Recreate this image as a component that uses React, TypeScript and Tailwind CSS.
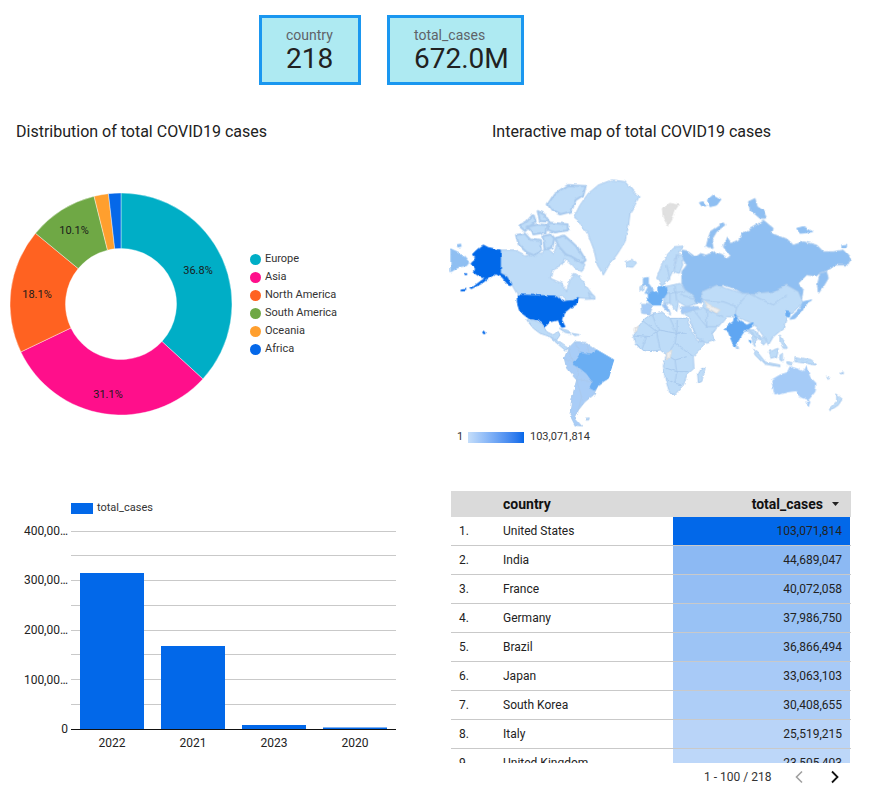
import React from "react";

const font = "font-['Roboto',_'Liberation_Sans',_sans-serif]";

const pieData = [
  { name: "Europe", value: 36.8, color: "#00aec6", label: "36.8%", lx: 198, ly: 270 },
  { name: "Asia", value: 31.1, color: "#ff0f8b", label: "31.1%", lx: 108, ly: 394 },
  { name: "North America", value: 18.1, color: "#ff6221", label: "18.1%", lx: 37, ly: 294 },
  { name: "South America", value: 10.1, color: "#6fa845", label: "10.1%", lx: 74, ly: 230 },
  { name: "Oceania", value: 2.1, color: "#ff9f2e", label: "", lx: 0, ly: 0 },
  { name: "Africa", value: 1.8, color: "#0568e9", label: "", lx: 0, ly: 0 },
];

const rows = [
  { country: "United States", cases: "103,071,814", bg: "bg-[#0268e9]" },
  { country: "India", cases: "44,689,047", bg: "bg-[#8cb9f3]" },
  { country: "France", cases: "40,072,058", bg: "bg-[#94bef4]" },
  { country: "Germany", cases: "37,986,750", bg: "bg-[#99c2f5]" },
  { country: "Brazil", cases: "36,866,494", bg: "bg-[#9dc4f5]" },
  { country: "Japan", cases: "33,063,103", bg: "bg-[#a8caf7]" },
  { country: "South Korea", cases: "30,408,655", bg: "bg-[#aecef7]" },
  { country: "Italy", cases: "25,519,215", bg: "bg-[#b9d4f8]" },
  { country: "United Kingdom", cases: "23,505,403", bg: "bg-[#bdd7f9]" },
];

const bars = [
  { year: "2022", x: 80, top: 573 },
  { year: "2021", x: 161, top: 646 },
  { year: "2023", x: 242, top: 725 },
  { year: "2020", x: 323, top: 727 },
];

function arc(start: number, end: number) {
  const cx = 121;
  const cy = 304;
  const R = 111;
  const r = 55.5;
  const p = (pct: number, rad: number) => {
    const a = (pct / 100) * Math.PI * 2 - Math.PI / 2;
    return `${cx + rad * Math.cos(a)},${cy + rad * Math.sin(a)}`;
  };
  const large = end - start > 50 ? 1 : 0;
  return `M${p(start, R)} A${R},${R} 0 ${large} 1 ${p(end, R)} L${p(end, r)} A${r},${r} 0 ${large} 0 ${p(start, r)} Z`;
}

const Donut = () => {
  let acc = 0;
  return (
    <svg width="223" height="223" viewBox="10 193 223 223" className="block">
      {pieData.map((d) => {
        const path = arc(acc, acc + d.value);
        acc += d.value;
        return <path key={d.name} d={path} fill={d.color} stroke="#ffffff" strokeWidth="0.4" />;
      })}
      {pieData
        .filter((d) => d.label)
        .map((d) => (
          <text key={d.name} x={d.lx} y={d.ly + 4} textAnchor="middle" fontSize="11" fill="#1a1a1a">
            {d.label}
          </text>
        ))}
    </svg>
  );
};

const WorldMap = () => (
  <svg width="420" height="257" viewBox="0 0 1260 771" className="block" stroke="#a9caee" strokeWidth="3" strokeLinejoin="round" fill="#bedcf8">
    <defs>
      {/* roughens the hand-traced coasts */}
      <filter id="coast" x="0" y="0" width="1260" height="771" filterUnits="userSpaceOnUse">
        <feTurbulence type="fractalNoise" baseFrequency="0.045" numOctaves="3" seed="4" result="n" />
        <feDisplacementMap in="SourceGraphic" in2="n" scale="10" xChannelSelector="R" yChannelSelector="G" />
        <feGaussianBlur stdDeviation="0.8" />
      </filter>
    </defs>
    <g filter="url(#coast)">
      {/* north america, coords from the 3x crop */}
      <g transform="translate(15,15)">
        <path fill="#8fbff2" stroke="#8fbff2" d="M18,222 L40,232 L58,245 L72,262 L65,272 L45,275 L35,280 L18,290 Z" />
        <path fill="#8fbff2" stroke="none" d="M34,208 L48,206 L50,215 L38,218 Z" />
        <path d="M166,225 L210,225 L240,240 L255,240 L270,225 L290,240 L300,215 L325,235 L335,208 L355,212 L372,232 L392,245 L420,268 L410,290 L392,280 L374,262 L358,250 L352,268 L322,285 L316,310 L350,325 L365,350 L375,312 L385,295 L405,305 L425,335 L450,368 L425,370 L400,368 L380,385 L350,365 L218,360 L202,332 L185,300 L166,295 Z" />
        <g strokeWidth="6">
          <path d="M308,88 L330,55 L370,30 L422,33 L415,60 L392,75 L378,110 L345,118 L320,105 Z" />
          <path d="M222,152 L245,140 L265,118 L272,140 L258,152 L240,168 Z" />
          <path d="M278,108 L300,120 L312,140 L285,138 Z" />
          <path d="M248,155 L280,148 L305,150 L302,172 L265,178 Z" />
          <path d="M312,143 L368,148 L368,166 L330,172 L308,165 Z" />
          <path d="M213,180 L240,176 L255,193 L285,198 L288,225 L270,242 L245,232 L222,210 Z" />
          <path d="M292,183 L318,178 L328,190 L322,218 L300,224 Z" />
          <path d="M330,190 L358,182 L382,203 L402,222 L422,255 L412,264 L385,248 L362,238 L342,215 Z" />
        </g>
        <path fill="#0268e9" stroke="#0268e9" d="M115,210 L130,218 L166,225 L166,295 L185,305 L200,330 L192,332 L170,305 L150,297 L130,310 L110,325 L80,340 L105,320 L120,310 L105,305 L85,292 L88,278 L78,262 L92,250 L82,238 L95,225 Z" />
        <path fill="#0268e9" stroke="#0268e9" d="M48,345 L62,343 L62,347 L48,348 Z M75,337 L82,335 L82,339 L76,340 Z M60,296 L65,296 L65,299 L60,299 Z" />
        <path fill="#0268e9" stroke="#0268e9" d="M113,468 L118,470 L120,476 L115,476 Z" />
        <path d="M430,355 L448,362 L450,370 L435,368 Z" />
      </g>
      <path d="M400,145 L420,105 L445,70 L475,45 L515,30 L555,35 L580,65 L597,80 L585,105 L570,130 L565,170 L555,215 L530,255 L510,280 L490,315 L472,285 L462,240 L445,195 L425,165 Z" />
      <path fill="#0268e9" stroke="#0268e9" d="M232,375 L345,378 L370,395 L400,392 L415,382 L410,400 L395,410 L370,430 L365,450 L375,470 L365,472 L355,450 L330,455 L315,470 L295,450 L270,448 L240,425 L232,400 Z" />
      {/* central and south america */}
      <g transform="translate(180,390)">
        <path d="M80,60 L100,60 L125,70 L140,95 L160,105 L175,95 L180,105 L170,120 L150,110 L120,100 L100,85 Z" />
        <path d="M150,110 L170,122 L190,135 L205,145 L195,150 L165,125 Z" />
        <path d="M178,85 L205,92 L212,100 L195,97 Z M215,100 L238,104 L225,107 Z" />
        <path fill="#a9cdf7" d="M205,145 L225,125 L260,128 L290,150 L340,180 L325,235 L295,255 L280,285 L255,305 L235,330 L225,355 L245,378 L225,375 L210,345 L215,300 L230,240 L200,205 L193,175 Z" />
        <path fill="#6aaef3" stroke="#6aaef3" d="M218,190 L240,160 L270,165 L290,150 L342,180 L325,235 L298,250 L285,270 L270,262 L278,245 L260,220 L235,200 Z" />
        <path fill="none" d="M205,145 L218,190 M240,160 L225,125 M193,175 L218,190 M235,200 L230,240 L245,290 L235,330 M230,240 L278,245 M260,128 L268,162" />
        <path d="M256,355 L268,354 L266,360 L258,360 Z" />
      </g>
      {/* africa and arabia */}
      <g transform="translate(540,390)">
        <path d="M40,105 L55,80 L70,60 L95,40 L125,35 L150,55 L175,55 L200,55 L215,95 L235,125 L255,125 L245,145 L220,170 L222,205 L200,225 L190,255 L165,283 L150,280 L135,235 L130,195 L140,165 L120,150 L90,155 L65,150 L45,130 Z" />
        <path fill="none" d="M65,60 L110,95 L120,150 M95,40 L115,90 L170,100 L200,100 M150,55 L170,100 L165,130 L220,170 M40,105 L90,110 L115,90 M65,150 L80,110 M165,130 L140,165 L165,180 L200,170 M165,180 L170,215 L205,215 M140,205 L170,215 L165,250 M135,235 L165,250 L190,255 M170,100 L172,60" />
        <path fill="#eeeeee" stroke="#dddddd" d="M42,88 L55,78 L50,92 L42,94 Z M140,160 L155,150 L150,175 L140,180 Z" />
        <path d="M245,205 L255,205 L245,245 L235,248 L233,225 Z" />
        <path d="M205,45 L240,45 L260,65 L285,90 L270,110 L240,125 L225,100 Z" />
        <path fill="none" d="M225,100 L270,85 M240,45 L255,85" />
      </g>
      {/* russia and the north */}
      <g transform="translate(540,60)">
        <path fill="#e0e0e0" stroke="#dcdcdc" d="M127,55 L150,40 L175,45 L165,60 L155,90 L145,105 L130,80 Z" />
        <path d="M15,215 L35,208 L50,218 L38,232 L22,228 Z" />
        <path fill="#8fbff2" stroke="#8fbff2" d="M238,38 L250,35 L258,48 L245,48 Z M262,30 L280,15 L303,28 L290,45 L270,50 Z" />
        <path fill="#8fbff2" d="M258,170 L270,125 L310,98 L315,105 L290,125 L275,150 L280,175 L265,175 Z" />
        <path fill="#8fbff2" d="M385,35 L405,25 L412,50 L430,62 L440,85 L420,85 L390,60 Z" />
        <path fill="#8fbff2" stroke="#8fbff2" d="M530,115 L550,110 L578,125 L560,128 L540,130 Z M665,165 L680,163 L678,172 L666,172 Z" />
        <path fill="#8fbff2" d="M185,245 L200,225 L190,210 L185,195 L185,180 L200,182 L225,200 L240,190 L258,195 L285,185 L310,195 L320,205 L330,200 L310,170 L320,143 L332,160 L355,150 L368,130 L410,105 L430,90 L460,115 L455,130 L480,140 L505,150 L520,165 L550,155 L590,165 L610,185 L640,185 L670,180 L692,205 L685,225 L650,225 L615,245 L600,248 L590,258 L560,255 L535,280 L550,300 L545,325 L525,340 L510,320 L480,295 L450,310 L410,315 L375,315 L340,295 L310,285 L285,295 L250,310 L245,340 L220,335 L200,310 L185,280 Z" />
        <path fill="#8fbff2" d="M620,245 L600,250 L592,285 L595,310 L610,290 L625,265 Z" />
        {/* europe */}
        <path d="M110,265 L125,225 L140,195 L165,170 L190,168 L180,180 L170,195 L165,215 L160,240 L145,270 L125,285 L115,270 Z" />
        <path d="M172,195 L185,195 L188,225 L178,250 L162,245 L167,220 Z" />
        <path d="M135,290 L180,280 L195,300 L220,315 L232,340 L200,350 L175,335 L170,365 L150,340 L135,340 Z" />
        <path fill="none" d="M135,310 L195,305 M165,285 L170,335 M150,310 L150,340 M180,315 L225,325 M140,225 L150,270" />
        <path fill="#8fbff2" stroke="#8fbff2" d="M70,265 L85,262 L85,280 L100,300 L95,310 L75,310 L85,290 L70,285 Z" />
        <path fill="#bedcf8" d="M60,290 L72,285 L72,300 L60,305 Z" />
        <path fill="#6aaef3" stroke="#6aaef3" d="M85,310 L100,305 L118,315 L130,325 L120,345 L100,345 L85,335 Z M113,290 L135,288 L140,310 L130,325 L115,315 Z" />
        <path fill="#a5cbf7" d="M62,340 L85,340 L98,347 L90,372 L65,370 Z" />
        <path fill="#9cc4f5" d="M125,345 L140,340 L152,372 L140,362 Z" />
        <path fill="#a5cbf7" d="M180,350 L235,350 L240,365 L185,368 Z" />
      </g>
      {/* asia */}
      <path d="M785,365 L830,345 L860,355 L905,370 L945,370 L1000,365 L1040,345 L1075,365 L1090,400 L1060,425 L1040,440 L1030,475 L1000,500 L985,525 L975,505 L950,470 L925,455 L885,440 L860,440 L835,470 L815,490 L825,510 L800,520 L770,500 L745,440 L735,430 L760,420 L790,415 Z" />
      <path fill="none" d="M785,390 L850,395 L890,410 L885,440 M890,410 L925,370 L1000,405 L1040,375 M760,420 L800,470 L835,470 M800,420 L800,470 M790,415 L850,440" />
      <path fill="#eeeeee" stroke="#dddddd" d="M795,395 L815,408 L840,420 L830,430 L805,415 Z" />
      <g transform="translate(780,390)">
        <path fill="#5ea6f2" stroke="#5ea6f2" d="M105,45 L115,60 L140,75 L160,68 L150,85 L135,90 L125,105 L110,130 L103,140 L92,115 L85,95 L72,90 L85,75 L100,65 Z" />
        <path d="M108,138 L115,140 L115,148 L109,146 Z" />
        <path fill="#6aaef3" stroke="#6aaef3" d="M148,122 L153,122 L153,128 L148,128 Z" />
        <path d="M140,90 L165,90 L175,110 L195,115 L200,125 L190,135 L185,120 L170,115 L165,140 L160,130 L155,105 Z" />
        <path fill="none" d="M150,92 L168,115 M172,95 L182,120" />
        <path d="M160,148 L175,160 L195,185 L185,185 L165,165 Z" />
        <path d="M190,185 L240,195 L240,200 L195,192 Z" />
        <path d="M205,155 L235,145 L230,170 L210,175 Z" />
        <path d="M240,165 L250,160 L250,185 L240,180 Z" />
        <path d="M240,105 L250,120 L262,145 L250,145 L240,125 Z" />
        <path d="M285,170 L335,180 L350,195 L320,190 L285,185 Z" />
        <path d="M260,185 L280,188 L275,195 L262,192 Z M380,228 L388,236 L384,238 Z M422,220 L430,216 L430,222 Z" />
        <path fill="#8fbff2" stroke="#8fbff2" d="M335,0 L310,5 L300,25 L275,50 L270,58 L285,55 L305,35 L318,10 Z" />
        <path fill="#6aaef3" stroke="#6aaef3" d="M258,32 L270,35 L268,52 L258,48 Z" />
        <path fill="#a5cbf7" stroke="#a5cbf7" d="M215,240 L240,225 L262,218 L270,200 L295,208 L310,215 L318,200 L330,232 L348,250 L345,275 L325,300 L300,290 L290,272 L265,275 L225,285 L220,265 Z" />
        <path fill="#a5cbf7" stroke="#a5cbf7" d="M318,305 L330,305 L325,320 Z" />
        <path d="M410,282 L428,295 L415,315 L390,332 L388,325 L410,305 Z" />
      </g>
    </g>
  </svg>
);

const BarChart = () => (
  <svg width="410" height="240" viewBox="0 520 410 240" className="block">
    {[531, 555, 580, 605, 630, 654, 679, 704].map((y) => (
      <line key={y} x1="71" x2="396" y1={y + 0.5} y2={y + 0.5} stroke="#c9c9c9" />
    ))}
    {[
      { t: "400,00…", y: 531 },
      { t: "300,00…", y: 580 },
      { t: "200,00…", y: 630 },
      { t: "100,00…", y: 680 },
      { t: "0", y: 729 },
    ].map((l) => (
      <text key={l.t} x="68" y={l.y + 4} textAnchor="end" fontSize="12" fill="#222222">
        {l.t}
      </text>
    ))}
    {bars.map((b) => (
      <g key={b.year}>
        <rect x={b.x} y={b.top} width="64" height={729 - b.top} fill="#0268e9" />
        <text x={b.x + 32} y="747" textAnchor="middle" fontSize="12" fill="#222222">
          {b.year}
        </text>
      </g>
    ))}
    <rect x="323" y="727" width="64" height="1" fill="#7fb0f0" />
    <line x1="71" x2="396" y1="729.5" y2="729.5" stroke="#111111" />
  </svg>
);

const ScoreCard = ({ label, value, width }: { label: string; value: string; width: string }) => (
  <div className={`${width} h-[70px] border-[3px] border-[#1a97f0] bg-[#aeeaf2] pl-[24px] pt-[9px]`}>
    <div className="text-sm leading-[16px] text-[#5f6368]">{label}</div>
    <div className="text-[28px] leading-[32px] text-[#212121]">{value}</div>
  </div>
);

export default function App() {
  return (
    <div className={`w-[869px] h-[797px] overflow-hidden bg-white ${font}`}>
      <div className="flex gap-[26px] pl-[259px] pt-[15px]">
        <ScoreCard label="country" value="218" width="w-[102px]" />
        <ScoreCard label="total_cases" value="672.0M" width="w-[137px]" />
      </div>

      <div className="grid h-[406px] grid-cols-[440px_429px]">
        <div>
          <h2 className="pl-[16px] pt-[37px] text-base leading-[20px] font-normal text-[#212121]">
            Distribution of total COVID19 cases
          </h2>
          <div className="mt-[51px] flex items-center pl-[10px]">
            <Donut />
            <div className="ml-[17px] flex flex-col">
              {pieData.map((d) => (
                <div key={d.name} className="flex h-[18px] items-center gap-[4px] text-[11px] text-[#333333]">
                  <span className="h-[11px] w-[11px] rounded-full" style={{ backgroundColor: d.color }} />
                  <span>{d.name}</span>
                </div>
              ))}
            </div>
          </div>
        </div>

        <div>
          <h2 className="pl-[52px] pt-[37px] text-base leading-[20px] font-normal text-[#212121]">
            Interactive map of total COVID19 cases
          </h2>
          <div className="mt-[28px]">
            <WorldMap />
          </div>
          <div className="mt-[1px] flex h-[18px] items-center pl-[17px] text-[11px] text-[#333333]">
            <span className="w-[11px]">1</span>
            <span className="h-[11px] w-[56px] bg-gradient-to-r from-[#c5defa] to-[#0268e9]" />
            <span className="ml-[6px]">103,071,814</span>
          </div>
        </div>
      </div>

      <div className="grid grid-cols-[440px_429px]">
        <div>
          <div className="flex h-[29px] items-center gap-[4px] pl-[71px] pt-[6px] text-[11px] text-[#333333]">
            <span className="h-[11px] w-[22px] bg-[#0268e9]" />
            <span>total_cases</span>
          </div>
          <BarChart />
        </div>

        <div className="pl-[11px]">
          <div className="w-[400px]">
            <div className="h-[272px] overflow-hidden">
              <div className="grid h-[26px] grid-cols-[52px_170px_178px] items-center bg-[#dadada] text-sm font-bold text-[#111111]">
                <span />
                <span>country</span>
                <span className="flex items-center justify-end gap-[9px] pr-[12px]">
                  total_cases
                  <svg width="7" height="4" viewBox="0 0 7 4">
                    <path d="M0,0 L7,0 L3.5,4 Z" fill="#222222" />
                  </svg>
                </span>
              </div>
              {rows.map((r, i) => (
                <div key={r.country} className="grid h-[29px] grid-cols-[52px_170px_177px] border-b border-[#c9c9c9] text-xs text-[#222222]">
                  <span className="pl-[8px] leading-[28px]">{i + 1}.</span>
                  <span className="leading-[28px]">{r.country}</span>
                  <span className={`${r.bg} pr-[8px] text-right leading-[28px]`}>{r.cases}</span>
                </div>
              ))}
            </div>
            <div className="flex h-[28px] items-center text-xs text-[#333333]">
              <span className="ml-[253px]">1 - 100 / 218</span>
              <svg width="10" height="14" viewBox="0 0 10 14" className="ml-[23px]" fill="none" stroke="#a0a0a0" strokeWidth="1.6">
                <path d="M8,1.5 L2.5,7 L8,12.5" />
              </svg>
              <svg width="10" height="14" viewBox="0 0 10 14" className="ml-[26px]" fill="none" stroke="#111111" strokeWidth="1.8">
                <path d="M2,1.5 L7.5,7 L2,12.5" />
              </svg>
            </div>
          </div>
        </div>
      </div>
    </div>
  );
}
